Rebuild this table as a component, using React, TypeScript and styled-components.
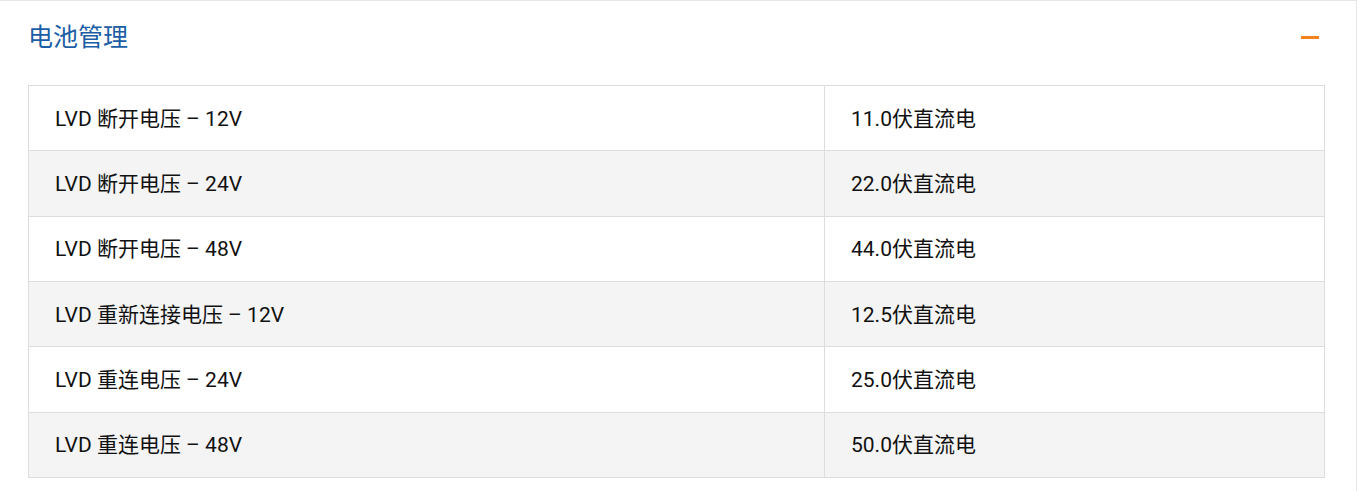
import React from 'react';
import styled, { createGlobalStyle } from 'styled-components';

const GlobalStyle = createGlobalStyle`
    html, body {
        margin: 0;
        padding: 0;
        background: #fff;
    }
    body {
        font-family: Roboto, "Noto Sans CJK SC", sans-serif;
    }
`;

const Panel = styled.section`
    box-sizing: border-box;
    width: 1357px;
    height: 491px;
    border-top: 1px solid #e6e6e6;
    border-right: 1px solid #e6e6e6;
    padding: 0 31px 0 28px;
    background: #fff;
`;

const Header = styled.div`
    display: flex;
    align-items: center;
    justify-content: space-between;
    height: 72px;
    margin-bottom: 12px;
`;

const Title = styled.h2`
    margin: 0;
    font-family: Roboto, "Noto Sans CJK SC", sans-serif;
    font-size: 25px;
    font-weight: 400;
    color: #1b5ea5;
    line-height: 1;
`;

const Collapse = styled.button`
    width: 18px;
    height: 3px;
    padding: 0;
    margin-right: 6px;
    border: none;
    background: #f5821f;
    cursor: pointer;
`;

const Table = styled.table`
    width: 100%;
    border-collapse: collapse;
    table-layout: fixed;
    border: 1px solid #dddddd;
`;

const Row = styled.tr<{ $shaded: boolean }>`
    height: 65.33px;
    background: ${(p) => (p.$shaded ? '#f4f4f4' : '#ffffff')};
`;

const Cell = styled.td<{ $w?: number }>`
    box-sizing: border-box;
    ${(p) => (p.$w ? `width: ${p.$w}px;` : '')}
    padding: 0 26px 3px;
    border: 1px solid #dddddd;
    font-size: 21px;
    color: #111111;
    vertical-align: middle;
    white-space: nowrap;
`;

const rows = [
    ['LVD 断开电压 – 12V', '11.0伏直流电'],
    ['LVD 断开电压 – 24V', '22.0伏直流电'],
    ['LVD 断开电压 – 48V', '44.0伏直流电'],
    ['LVD 重新连接电压 – 12V', '12.5伏直流电'],
    ['LVD 重连电压 – 24V', '25.0伏直流电'],
    ['LVD 重连电压 – 48V', '50.0伏直流电'],
];

export default function App(): JSX.Element {
    return (
        <>
            <GlobalStyle />
            <Panel>
                <Header>
                    <Title>电池管理</Title>
                    <Collapse aria-label='collapse' />
                </Header>
                <Table>
                    <tbody>
                        {rows.map(([name, value], i) => (
                            <Row key={i} $shaded={i % 2 === 1}>
                                <Cell $w={796}>{name}</Cell>
                                <Cell>{value}</Cell>
                            </Row>
                        ))}
                    </tbody>
                </Table>
            </Panel>
        </>
    );
}
